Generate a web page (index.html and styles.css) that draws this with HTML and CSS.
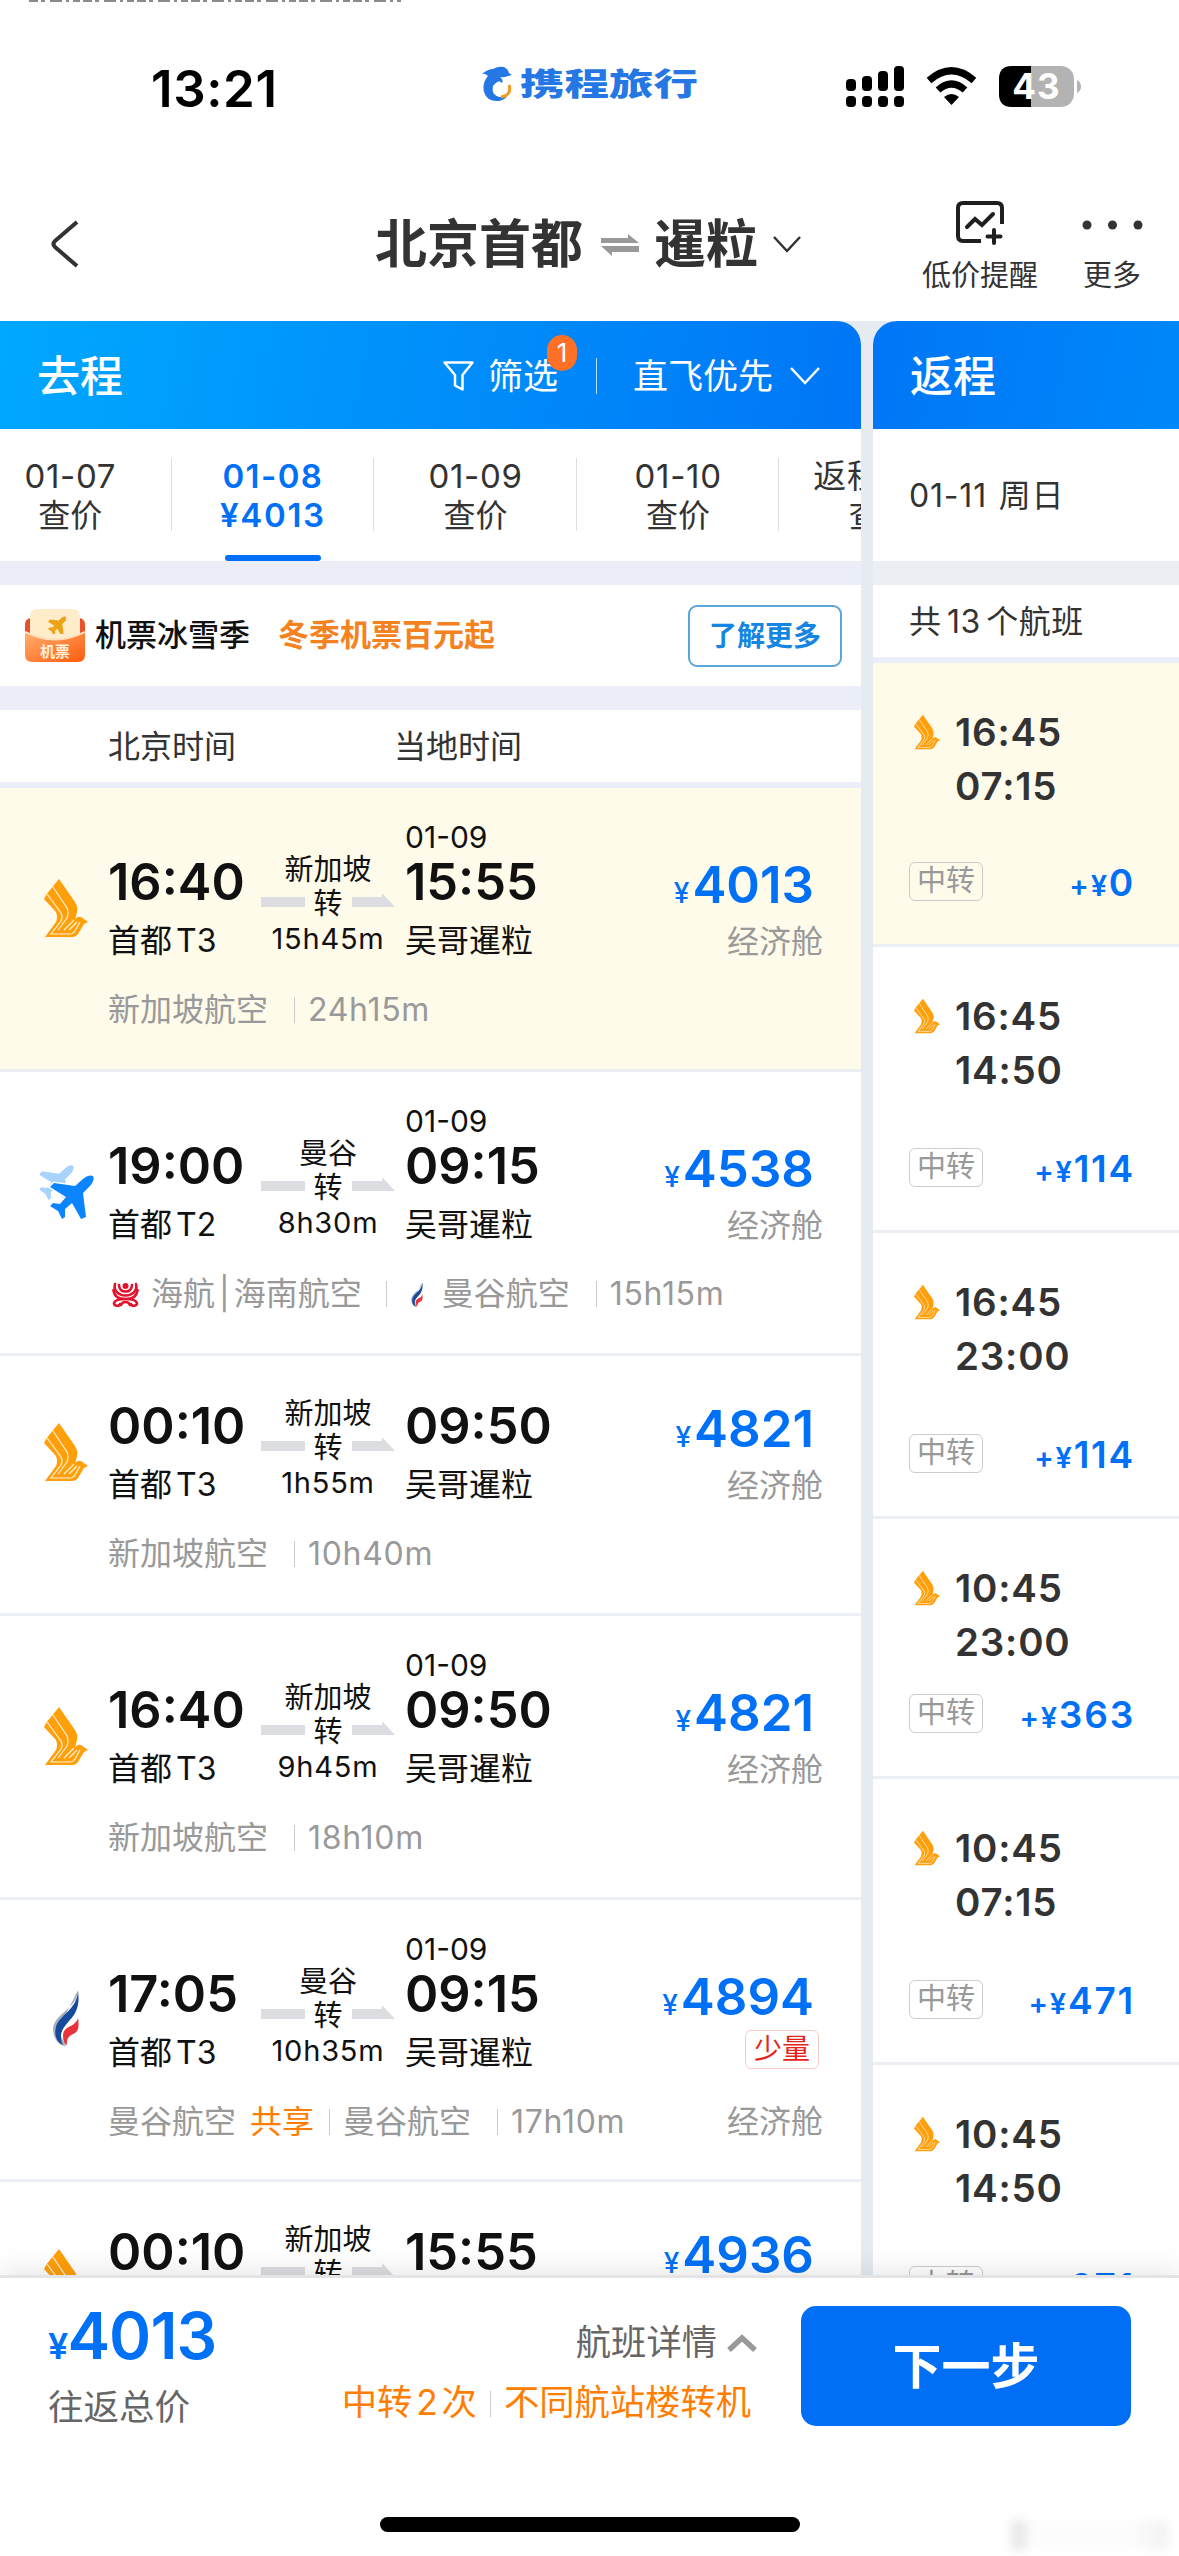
FILE: index.html
```html
<!DOCTYPE html>
<html lang="zh-CN">
<head>
<meta charset="utf-8">
<title>北京首都 ⇌ 暹粒</title>
<link rel="stylesheet" href="styles.css">
</head>
<body>
<svg class="defs" aria-hidden="true">
  <symbol id="sq" viewBox="0 0 44 58">
    <path fill="#ff9f0a" d="M15 0 31 23Q34 28 33 33L31 41Q33 37 37 38L44 43 40 45 34 55Q32 58 28 58H1L12 43Q14 38 12 33L0 20Q2 15 6 11L15 0Z"/>
    <path class="sq-lines" d="M3 15 17 34Q19 38 17 42L7 55H26Q29 55 31 52L36 43M9 8 23 29Q25 34 23 39L14 51M20 51 30 41M25 51 33 43"/>
  </symbol>
  <symbol id="plane" viewBox="0 0 54 54">
    <path d="M43 14Q48 9 53 11 55 15 50 21L43 28 46 52 41 54 32 38 25 44 25 52 22 54 18 46 10 41 13 38 20 39 26 32 10 22 14 18 35 21Z"/>
  </symbol>
  <symbol id="multi" viewBox="0 0 54 54">
    <use href="#plane" fill="#a9d3fd" width="43" height="43" x="-9" y="-8"/>
    <use href="#plane" fill="#fff" stroke="#fff" stroke-width="3" width="54" height="54"/>
    <use href="#plane" fill="#0a84ff" width="54" height="54"/>
  </symbol>
  <symbol id="pg" viewBox="0 0 26 56">
    <path fill="#a9b0ba" d="M25 0C25 18 3 22 0 38 0 48 5 56 13 56L5 40Z"/>
    <path fill="#164a9c" d="M25 1C28 22 18 28 12 36 7 42 7 49 10 55 3 52 1 44 3 37 6 25 24 20 25 1Z"/>
    <path fill="#e8333c" d="M25 28C22 38 11 35 10 45 10 50 11 54 14 55 13 47 18 45 22 43 26 41 26 34 25 28Z"/>
  </symbol>
  <symbol id="hu" viewBox="0 0 27 25">
    <g fill="none" stroke="#e2132c" stroke-width="2.600" stroke-linecap="round">
      <path d="M3 2C1 9 7 13.500 13.500 13.500S26 9 24 2M7 3C7 7.500 10 9.500 13.500 9.500S20 7.500 20 3"/>
      <path d="M1.500 8C2 15 8 17 13.500 17S25 15 25.500 8M13.500 17C8 17 3 18 2 21 2 24 7 25 8 22M13.500 17C19 17 24 18 25 21 25 24 20 25 19 22M9 23C10 20 12 20 13.500 20S17 20 18 23"/>
    </g>
    <circle cx="13.500" cy="4" r="3" fill="#e2132c"/>
  </symbol>
  <symbol id="leg" viewBox="0 0 134 14"><path fill="#dcdde0" d="M0 4H44V14H0ZM91 4H121V0L134 14H91Z"/></symbol>
</svg>

<header class="status">
  <svg class="cut-line" width="372" height="3"><path d="M0 1H372" stroke="#8a8a8a" stroke-width="2" stroke-dasharray="9 3 4 5 12 4 3 4 7 3"/></svg>
  <span class="clock">13:21</span>
  <svg class="brand" width="218" height="36" viewBox="0 0 218 36">
    <path fill="#2577e3" d="M1 8Q7 3 12 3 17 0 23 1 27 3 28 7L31 9 27 10Q23 12 19 11 23 14 21 17 15 15 12 20 10 29 18 31 26 31 28 25 27 33 18 35 6 36 3 26 1 17 7 10 4 7 1 8Z"/>
    <path d="M28 19Q31 29 20 31" fill="none" stroke="#f7991c" stroke-width="3"/>
    <path d="M13 24Q15 15 20 17" fill="none" stroke="#fff" stroke-width="2"/>
    <text class="brand-text" x="39" y="29" textLength="178" lengthAdjust="spacingAndGlyphs">携程旅行</text>
  </svg>
  <svg class="signals" width="236" height="42" viewBox="0 0 236 42">
    <rect x="0" y="13" width="10" height="12" rx="4"/><rect x="16" y="10" width="10" height="15" rx="4"/><rect x="32" y="5" width="10" height="20" rx="4"/><rect x="48" y="0" width="10" height="25" rx="4"/>
    <rect x="0" y="30" width="10" height="11" rx="4"/><rect x="16" y="30" width="10" height="11" rx="4"/><rect x="32" y="30" width="10" height="11" rx="4"/><rect x="48" y="30" width="10" height="11" rx="4"/>
    <path d="M98 31Q105.500 25 113 31L105.500 39Z"/>
    <path d="M92 24Q105.500 12 119 24M83 14.500Q105.500-5 128 14.500" fill="none" stroke="#000" stroke-width="7"/>
    <rect x="153" y="0" width="75" height="41" rx="13" fill="#b3b3b3"/>
    <path d="M185 0V41H166Q153 41 153 28V13Q153 0 166 0Z"/>
    <path d="M231 14Q235 16 235 20.500T231 27Z" fill="#b3b3b3"/>
    <text class="battery" x="190.500" y="33" text-anchor="middle">43</text>
  </svg>
</header>

<nav class="nav">
  <svg class="back" width="30" height="48" viewBox="0 0 30 48"><path d="M27 2 5 21Q2 24 5 27L27 46" fill="none" stroke="#333" stroke-width="4"/></svg>
  <h1 class="route"><span>北京首都</span>
    <svg width="38" height="22" viewBox="0 0 38 22"><path fill="#999" d="M0 4H27V0L38 9H0ZM0 12H38V18H11V22Z"/></svg>
    <span>暹粒</span>
    <svg width="28" height="18" viewBox="0 0 28 18"><path d="M1 1 14 15 27 1" fill="none" stroke="#333" stroke-width="2.500"/></svg>
  </h1>
  <div class="tool tool-alert">
    <svg width="50" height="44" viewBox="0 0 50 44" fill="none" stroke="#1f1f1f" stroke-width="4" stroke-linecap="round"><path stroke-linecap="butt" d="M47 23V7Q47 2 42 2H8Q3 2 3 7V35Q3 40 8 40H26"/><path d="M12 26 20 18 27 24 38 13M39 29V42M32.500 35.500H45.500"/></svg>
    <span>低价提醒</span>
  </div>
  <div class="tool">
    <svg width="62" height="44" viewBox="0 0 62 44" fill="#333"><circle cx="6" cy="24" r="4.500"/><circle cx="31.500" cy="24" r="4.500"/><circle cx="57" cy="24" r="4.500"/></svg>
    <span>更多</span>
  </div>
</nav>

<main class="columns">
  <section class="col out">
    <div class="col-head">
      <h2>去程</h2>
      <span class="filter"><svg width="31" height="31" viewBox="0 0 31 31"><path d="M1.500 1.500H29.500L19.500 14V28.500L12 24.500V14Z" fill="none" stroke="#fff" stroke-width="2.500" stroke-linejoin="round"/></svg>筛选<b class="badge">1</b></span>
      <span class="sort">直飞优先<svg width="30" height="20" viewBox="0 0 30 20"><path d="M1 2 15 17 29 2" fill="none" stroke="#fff" stroke-width="2.500"/></svg></span>
    </div>
    <div class="dates">
      <div class="date">01-07<span>查价</span></div>
      <div class="date date-on">01-08<span>¥4013</span></div>
      <div class="date">01-09<span>查价</span></div>
      <div class="date">01-10<span>查价</span></div>
      <div class="date">返程日期<span>查价</span></div>
    </div>
    <div class="promo">
      <svg width="60" height="54" viewBox="0 0 60 54">
        <defs><linearGradient id="g1" x1="0" x2="1" y2="1"><stop stop-color="#ffb070"/><stop offset="1" stop-color="#ff5a0c"/></linearGradient></defs>
        <rect y="9" width="60" height="28" rx="6" fill="#e9502c"/>
        <rect x="5" y="0" width="50" height="36" rx="7" fill="#ffeccb"/>
        <path d="M0 23Q30 38 60 23V46Q60 53 53 53H7Q0 53 0 46Z" fill="url(#g1)"/>
        <path d="M0 23Q30 38 60 23" fill="none" stroke="#ffe0bb" stroke-width="2"/>
        <use href="#plane" x="20" y="4" width="21" height="21" fill="#eda316" stroke="#eda316" stroke-width="3"/>
        <text class="promo-tag" x="30" y="48" text-anchor="middle">机票</text>
      </svg>
      <strong>机票冰雪季</strong><em>冬季机票百元起</em><button class="more">了解更多</button>
    </div>
    <div class="legend"><span>北京时间</span><span>当地时间</span></div>

    <article class="flight flight-on">
      <svg class="logo" width="44" height="58"><use href="#sq"/></svg>
      <div class="dep"><b>16:40</b><span>首都 T3</span></div>
      <div class="via"><span>新加坡</span><span class="hop"><svg width="134" height="14"><use href="#leg"/></svg>转</span><span>15h45m</span></div>
      <div class="arr"><i>01-09</i><b>15:55</b><span>吴哥暹粒</span></div>
      <div class="fare"><b><small>¥</small>4013</b><span>经济舱</span></div>
      <div class="meta"><span>新加坡航空</span><span class="total">24h15m</span></div>
    </article>
    <article class="flight">
      <svg class="logo logo-multi" width="54" height="54"><use href="#multi"/></svg>
      <div class="dep"><b>19:00</b><span>首都 T2</span></div>
      <div class="via"><span>曼谷</span><span class="hop"><svg width="134" height="14"><use href="#leg"/></svg>转</span><span>8h30m</span></div>
      <div class="arr"><i>01-09</i><b>09:15</b><span>吴哥暹粒</span></div>
      <div class="fare"><b><small>¥</small>4538</b><span>经济舱</span></div>
      <div class="meta"><svg class="mini-hu" width="27" height="25"><use href="#hu"/></svg><span>海航 | 海南航空</span><span class="sep"><svg class="mini-pg" width="12" height="25"><use href="#pg"/></svg>曼谷航空</span><span class="total">15h15m</span></div>
    </article>
    <article class="flight flight-same-day">
      <svg class="logo" width="44" height="58"><use href="#sq"/></svg>
      <div class="dep"><b>00:10</b><span>首都 T3</span></div>
      <div class="via"><span>新加坡</span><span class="hop"><svg width="134" height="14"><use href="#leg"/></svg>转</span><span>1h55m</span></div>
      <div class="arr"><b>09:50</b><span>吴哥暹粒</span></div>
      <div class="fare"><b><small>¥</small>4821</b><span>经济舱</span></div>
      <div class="meta"><span>新加坡航空</span><span class="total">10h40m</span></div>
    </article>
    <article class="flight">
      <svg class="logo" width="44" height="58"><use href="#sq"/></svg>
      <div class="dep"><b>16:40</b><span>首都 T3</span></div>
      <div class="via"><span>新加坡</span><span class="hop"><svg width="134" height="14"><use href="#leg"/></svg>转</span><span>9h45m</span></div>
      <div class="arr"><i>01-09</i><b>09:50</b><span>吴哥暹粒</span></div>
      <div class="fare"><b><small>¥</small>4821</b><span>经济舱</span></div>
      <div class="meta"><span>新加坡航空</span><span class="total">18h10m</span></div>
    </article>
    <article class="flight flight-few">
      <svg class="logo logo-pg" width="26" height="56"><use href="#pg"/></svg>
      <div class="dep"><b>17:05</b><span>首都 T3</span></div>
      <div class="via"><span>曼谷</span><span class="hop"><svg width="134" height="14"><use href="#leg"/></svg>转</span><span>10h35m</span></div>
      <div class="arr"><i>01-09</i><b>09:15</b><span>吴哥暹粒</span></div>
      <div class="fare"><b><small>¥</small>4894</b><mark>少量</mark></div>
      <div class="meta"><span>曼谷航空</span><span class="share">共享</span><span class="sep sep-tight">曼谷航空</span><span class="total">17h10m</span><span class="cabin">经济舱</span></div>
    </article>
    <article class="flight flight-same-day">
      <svg class="logo" width="44" height="58"><use href="#sq"/></svg>
      <div class="dep"><b>00:10</b><span>&nbsp;</span></div>
      <div class="via"><span>新加坡</span><span class="hop"><svg width="134" height="14"><use href="#leg"/></svg>转</span><span>&nbsp;</span></div>
      <div class="arr"><b>15:55</b><span>&nbsp;</span></div>
      <div class="fare"><b><small>¥</small>4936</b><span>&nbsp;</span></div>
    </article>
  </section>

  <section class="col back-col">
    <div class="col-head"><h2>返程</h2></div>
    <div class="back-date">01-11 周日</div>
    <div class="count">共 13 个航班</div>
    <article class="ret ret-on"><svg width="26" height="36"><use href="#sq"/></svg><div class="times"><b>16:45</b><b>07:15</b></div><div class="ret-foot"><span class="tag">中转</span><span class="plus"><small>+¥</small>0</span></div></article>
    <article class="ret"><svg width="26" height="36"><use href="#sq"/></svg><div class="times"><b>16:45</b><b>14:50</b></div><div class="ret-foot"><span class="tag">中转</span><span class="plus"><small>+¥</small>114</span></div></article>
    <article class="ret"><svg width="26" height="36"><use href="#sq"/></svg><div class="times"><b>16:45</b><b>23:00</b></div><div class="ret-foot"><span class="tag">中转</span><span class="plus"><small>+¥</small>114</span></div></article>
    <article class="ret ret-short"><svg width="26" height="36"><use href="#sq"/></svg><div class="times"><b>10:45</b><b>23:00</b></div><div class="ret-foot"><span class="tag">中转</span><span class="plus"><small>+¥</small>363</span></div></article>
    <article class="ret"><svg width="26" height="36"><use href="#sq"/></svg><div class="times"><b>10:45</b><b>07:15</b></div><div class="ret-foot"><span class="tag">中转</span><span class="plus"><small>+¥</small>471</span></div></article>
    <article class="ret"><svg width="26" height="36"><use href="#sq"/></svg><div class="times"><b>10:45</b><b>14:50</b></div><div class="ret-foot"><span class="tag">中转</span><span class="plus"><small>+¥</small>671</span></div></article>
  </section>
</main>

<footer class="bar">
  <div class="bar-main">
    <div class="sum"><b><small>¥</small>4013</b><span>往返总价</span></div>
    <div class="detail">
      <span class="detail-link">航班详情<svg width="30" height="18" viewBox="0 0 30 18"><path d="M2 16 15 4 28 16" fill="none" stroke="#999" stroke-width="5.500"/></svg></span>
      <span class="notes"><span>中转 2 次</span><span class="note-sep">不同航站楼转机</span></span>
    </div>
    <button class="next">下一步</button>
  </div>
  <div class="home"></div>
  <div class="watermark"></div>
</footer>
</body>
</html>
```
FILE: styles.css
```css
* { box-sizing: border-box; margin: 0; padding: 0; }
body {
  width: 1179px; height: 2556px; overflow: hidden;
  display: flex; flex-direction: column;
  background: #fff; color: #333;
  font-family: Inter, "Noto Sans CJK SC", sans-serif;
  font-size: 32px; line-height: 1;
}
svg { display: block; flex: none; }
b, i, em, h1, h2 { font-style: normal; font-weight: 600; }
small { line-height: 0; }
button { font: inherit; border: 0; background: none; }
.defs { position: absolute; width: 0; height: 0; }
.sq-lines { fill: none; stroke: #fff; stroke-width: 1.2; opacity: .85; }

/* status bar */
.status {
  position: relative; height: 174px; padding-left: 151px;
  display: grid; grid-template-columns: 330px 218px 1fr; align-items: center;
}
.cut-line { position: absolute; left: 29px; top: 0; }
.clock { margin-top: 2px; font-size: 51px; font-weight: 600; color: #000; letter-spacing: .6px; }
.brand { margin-top: -6px; }
.brand-text { font: 900 31px "Noto Sans CJK SC", sans-serif; fill: #2577e3; }
.signals { margin-left: 147px; }
.battery { font: 700 35px Inter, sans-serif; fill: #fff; letter-spacing: 1px; }

/* navigation */
.nav { height: 147px; padding: 25px 39px 0 50px; display: flex; align-items: flex-start; }
.back { margin-top: 21px; }
.route { flex: none; margin-left: 295px; width: 547px; height: 91px; display: flex; align-items: center; font-size: 52px; font-weight: 700; white-space: nowrap; }
.route svg:first-of-type { margin: 0 15px 0 18px; }
.route svg:last-child { margin-left: 15px; }
.tool { flex: none; display: flex; flex-direction: column; align-items: center; gap: 14px; padding-top: 2px; font-size: 29px; line-height: 33px; white-space: nowrap; }
.tool-alert { margin-right: 43px; }

/* two columns */
.columns { height: 1954px; display: flex; gap: 12px; overflow: hidden; background: #e6ebf2; }
.col { overflow: hidden; background: #fff; }
.out { width: 861px; border-top-right-radius: 24px; }
.back-col { width: 306px; border-top-left-radius: 24px; }
.col-head { height: 108px; display: flex; align-items: center; color: #fff; padding: 2px 0 0 37px; font-size: 35px; }
.out .col-head { background: linear-gradient(100deg, #00a8ff, #0076f6); }
.back-col .col-head { background: linear-gradient(100deg, #0076f6, #0088fa); }
.col-head h2 { font-size: 43px; font-weight: 500; }
.filter { position: relative; display: flex; align-items: center; gap: 14px; margin-left: 320px; padding-right: 39px; }
.filter::after { content: ""; position: absolute; right: 0; width: 1px; height: 36px; background: rgba(255,255,255,.7); }
.badge { position: absolute; left: 104px; top: -24px; width: 30px; height: 36px; border-radius: 15px; background: #ff7027; font-size: 26px; font-weight: 400; line-height: 36px; text-align: center; }
.sort { display: flex; align-items: center; gap: 17px; margin-left: 36px; }

.dates { height: 132px; display: flex; margin-left: -31px; }
.date { position: relative; flex: none; width: 202.600px; padding-top: 28px; display: flex; flex-direction: column; align-items: center; line-height: 39px; font-size: 33px; letter-spacing: .7px; }
.date span { font-size: 32px; letter-spacing: 0; }
.date:not(:last-child)::before { content: ""; position: absolute; right: 0; top: 29px; width: 1px; height: 73px; background: #dcdfe4; }
.date-on { color: #0070f6; font-weight: 600; letter-spacing: 1.4px; }
.date-on span { font-size: 33px; letter-spacing: 1.7px; }
.date-on::after { content: ""; position: absolute; bottom: 0; width: 96px; height: 6px; border-radius: 3px; background: #0070f6; }

.promo { height: 149px; border: solid #ebeef6; border-width: 24px 0; padding: 0 19px 0 25px; display: flex; align-items: center; color: #111; font-size: 31px; }
.promo strong { margin: -3px 30px 0 10px; font-weight: 500; }
.promo em { margin: -3px 0 0 -2px; color: #f58220; font-weight: 700; }
.promo-tag { font: 700 15px "Noto Sans CJK SC", sans-serif; fill: #fff0d8; }
.more { margin-left: auto; width: 154px; height: 62px; border: 2px solid #5aa5da; border-radius: 9px; color: #1485e0; font-size: 28px; font-weight: 700; line-height: 54px; }
.legend { height: 78px; padding: 2px 0 0 108px; border-bottom: 6px solid #ebeef6; display: grid; grid-template-columns: 286px 1fr; align-items: center; }

/* outbound flights */
.flight { border-bottom: 3px solid #ebeef3; padding: 33px 38px 39px 0; display: grid; grid-template-columns: 108px 149px 142px 158px 1fr; align-items: end; color: #111; line-height: 60px; word-spacing: -5px; }
.flight-same-day { padding-top: 41px; }
.flight-few { padding-bottom: 37px; }
.flight-on, .ret-on { background: #fffbea; }
.logo { margin: 0 0 34px 44px; }
.logo-multi { margin: 0 0 36px 40px; }
.logo-pg { margin: 0 0 37px 53px; }
.flight b, .flight span { display: block; white-space: nowrap; }
.dep b, .arr b { font-size: 50.500px; line-height: 58px; }
.arr { padding-left: 6px; }
.arr i { display: block; font-weight: 400; font-size: 30px; line-height: 32px; }
.via { padding-bottom: 14px; text-align: center; font-size: 29px; line-height: 34px; }
.via > span:last-child { line-height: 36px; letter-spacing: .8px; }
.via .hop { position: relative; line-height: 34px; letter-spacing: 0; }
.hop svg { position: absolute; left: 4px; top: 6px; }
.fare { text-align: right; padding-bottom: 4px; }
.fare b { padding-right: 9px; font-size: 51px; line-height: 62px; color: #0070f6; }
.fare small { font-size: 28px; font-weight: 500; margin-right: 3px; }
.fare span { color: #999; line-height: 51px; }
.fare mark { display: block; width: 74px; height: 39px; margin: 2px 4px 10px auto; border: 1.500px solid #f9c9c9; border-radius: 6px; background: none; color: #e3241b; font-size: 28px; line-height: 37px; text-align: center; }
.meta { grid-column: 2 / -1; margin-top: 19px; line-height: 40px; display: flex; align-items: center; color: #999; }
.meta .total { margin-left: 26px; letter-spacing: .7px; }
.meta .sep { display: flex; align-items: center; margin-left: 24px; }
.meta .sep-tight { margin-left: 15px; }
.total::before, .meta .sep::before, .note-sep::before { content: ""; display: inline-block; width: 1px; height: 26px; margin-right: 13px; background: #ccc; vertical-align: -2px; }
.mini-hu { margin: 0 12px 0 4px; }
.mini-pg { margin: 0 19px 0 11px; }
.share { margin-left: 14px; color: #ff7d00; }
.cabin { margin-left: auto; }

/* return flights */
.back-date { height: 156px; padding-left: 36px; border-bottom: 24px solid #ebeef3; line-height: 133px; letter-spacing: .8px; word-spacing: 2px; }
.count { height: 78px; padding-left: 36px; border-bottom: 6px solid #ebeef6; line-height: 74px; letter-spacing: .5px; word-spacing: -4px; }
.ret { height: 286px; padding: 42px 46px 43px 36px; border-bottom: 3px solid #ebeef3; display: grid; grid-template-columns: 46px 1fr; grid-template-rows: 1fr auto; }
.ret-on { height: 284px; }
.ret-short { height: 260px; }
.ret > svg { margin: 9px 0 0 5px; }
.times b { display: block; font-size: 38.500px; line-height: 54px; letter-spacing: .8px; }
.ret-foot { grid-column: 1 / -1; display: flex; justify-content: space-between; align-items: center; }
.tag { width: 74px; height: 39px; border: 1.500px solid #ccc; border-radius: 6px; color: #999; font-size: 29px; line-height: 36px; text-align: center; }
.plus { margin: 1px -2px 0 0; color: #0070f6; font-size: 37px; font-weight: 600; letter-spacing: 1.8px; }
.plus small { font-size: 29px; }

/* summary bar */
.bar { position: relative; height: 281px; border-top: 3px solid #e4e4e6; background: #fff; box-shadow: 0 -4px 26px rgba(0,0,0,.1); }
.bar-main { height: 179px; padding: 28px 48px 0; display: flex; align-items: flex-start; }
.sum b { display: block; font-size: 64px; line-height: 60px; color: #0070f6; letter-spacing: -.9px; }
.sum small { font-size: 36px; }
.sum span { display: block; margin-top: 24px; font-size: 35.500px; line-height: 36px; color: #666; }
.detail { margin-left: auto; margin-right: 50px; display: flex; flex-direction: column; align-items: flex-end; }
.detail-link { display: flex; align-items: center; gap: 10px; margin: 19px -6px 0 0; font-size: 35.300px; line-height: 36px; color: #666; }
.notes { display: flex; margin-top: 24px; font-size: 35.300px; line-height: 36px; color: #ff7d00; word-spacing: -6px; }
.note-sep::before { margin: 0 13px; }
.next { width: 330px; height: 120px; border-radius: 15px; background: #006ff6; color: #fff; font-size: 49px; font-weight: 700; }
.home { width: 420px; height: 15px; margin: 60px 0 0 380px; border-radius: 8px; background: #000; }
.watermark { position: absolute; left: 1010px; top: 242px; width: 158px; height: 30px; opacity: .4; filter: blur(4px); background: linear-gradient(90deg, #ccc 0 14px, #f8f8f8 20px 78%, #ddd); }
```
